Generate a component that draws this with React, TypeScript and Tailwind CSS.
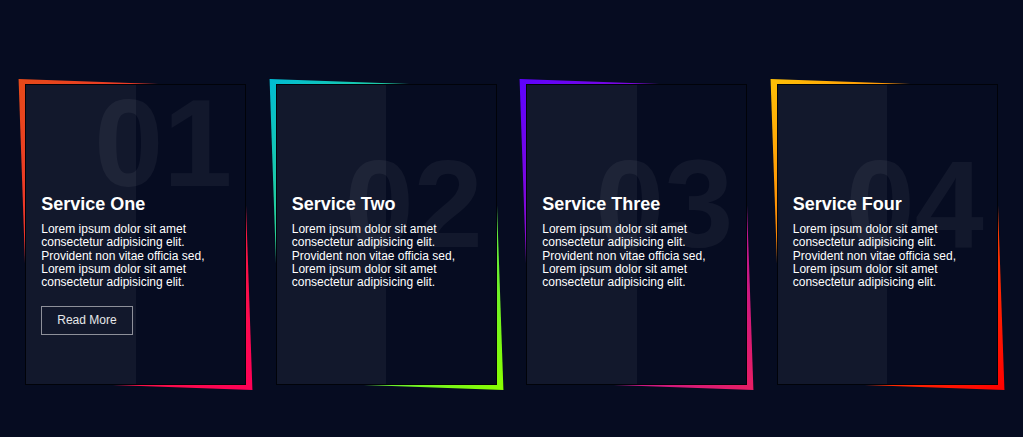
import React from 'react';

type Service = {
  num: string;
  title: string;
  gradient: string;
  active?: boolean;
};

const SERVICES: Service[] = [
  { num: '01', title: 'Service One', gradient: 'bg-[linear-gradient(315deg,#ff0057,#e64a19)]', active: true },
  { num: '02', title: 'Service Two', gradient: 'bg-[linear-gradient(315deg,#89ff00,#00bcd4)]' },
  { num: '03', title: 'Service Three', gradient: 'bg-[linear-gradient(315deg,#e91e63,#5d02ff)]' },
  { num: '04', title: 'Service Four', gradient: 'bg-[linear-gradient(315deg,#ff0000,#ffc107)]' },
];

const ServiceBox: React.FC<{ service: Service }> = ({ service }) => {
  return (
    <div className="relative isolate w-[221px] h-[301px] shrink-0">
      {/* skewed gradient frame behind the box */}
      <div className={`absolute -inset-[1px] -z-10 skew-2 ${service.gradient}`} />

      <div className="relative h-full w-full overflow-hidden bg-[#060c21] border border-black/70">
        {/* big faded number */}
        <span
          className={`absolute right-[13px] font-bold text-[124px] leading-[140px] text-white/5 select-none ${
            service.active ? 'top-[-12px]' : 'top-[49px]'
          }`}
        >
          {service.num}
        </span>

        {/* left half highlight */}
        <div className="absolute inset-y-0 left-0 w-1/2 bg-white/5 pointer-events-none" />

        <div className="relative pt-[109px] px-[15px]">
          <h3 className="text-[18px] font-bold text-white leading-[20.7px] mb-[8px]">{service.title}</h3>
          <p className="text-[12px] leading-[13.4px] text-white">
            Lorem ipsum dolor sit amet consectetur adipisicing elit. Provident non vitae officia sed, Lorem ipsum
            dolor sit amet consectetur adipisicing elit.
          </p>
          {service.active && (
            <a
              href="#"
              className="mt-[16px] inline-flex items-center h-[29px] px-[15px] border border-[#8e909a] text-[12px] text-white/90"
            >
              Read More
            </a>
          )}
        </div>
      </div>
    </div>
  );
};

export default function App() {
  return (
    <div className="min-h-screen bg-[#060c21] flex justify-center items-start gap-[29.5px] pt-[84px] font-['Liberation_Sans',Arial,sans-serif]">
      {SERVICES.map((s) => (
        <ServiceBox key={s.num} service={s} />
      ))}
    </div>
  );
}
